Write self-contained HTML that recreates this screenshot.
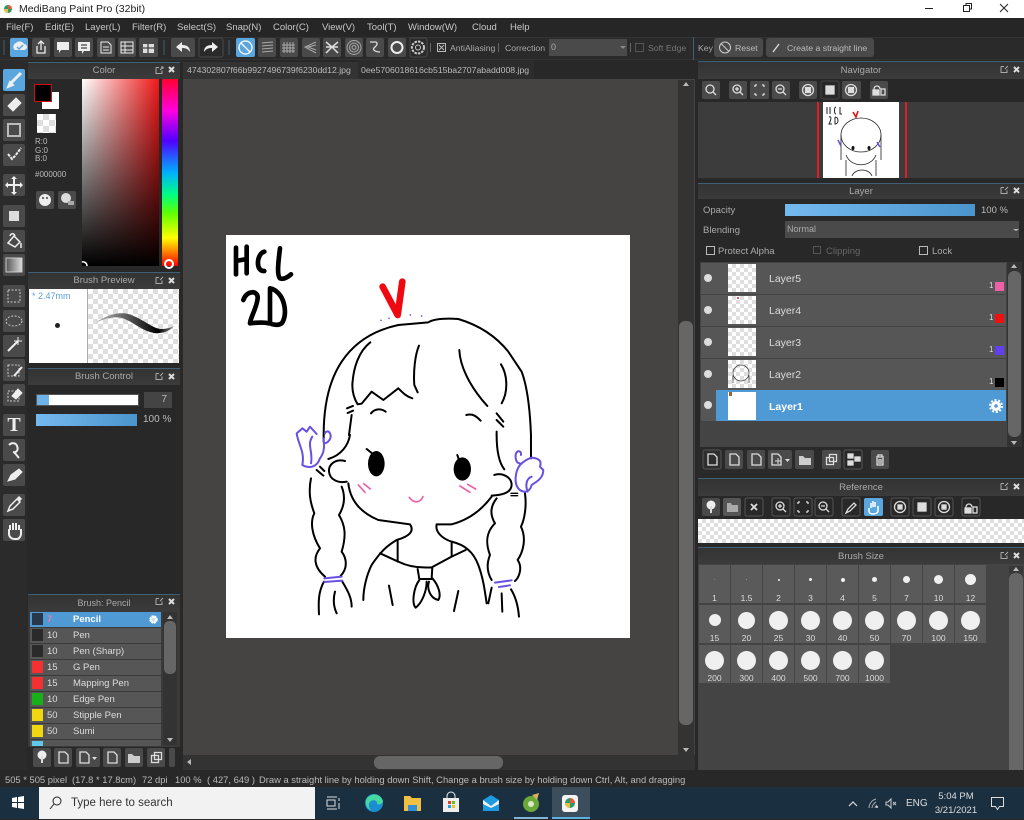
<!DOCTYPE html>
<html><head><meta charset="utf-8"><style>
html,body{margin:0;padding:0;background:#282828}
body{width:1024px;height:819px;overflow:hidden;position:relative;font-family:"Liberation Sans",sans-serif;font-size:9.5px;color:#c4c4c4}
div{position:absolute;box-sizing:border-box}
span{position:absolute;white-space:nowrap}
.h{background:linear-gradient(#333,#3b3b3b);border-top:1px solid #3f6075;text-align:center;color:#aaa;font-size:9.5px;line-height:16px}
.ck{background:repeating-conic-gradient(#dedede 0 25%,#fff 0 50%) 0 0/8px 8px}
.lr{left:701px;width:305px;height:31px;background:#565656}
.th{left:728px;width:28px;height:28px}
.ln{left:769px;font-size:10.5px;color:#ddd;line-height:31px}
.dot{left:704px;width:8px;height:8px;border-radius:50%;background:#ddd}
.bl{left:30px;width:131px;height:15px;background:#565656;color:#ddd;line-height:15px;font-size:9.5px}
.bl i{position:absolute;left:2px;top:1px;width:11px;height:12px}
.bl b{position:absolute;left:17px;font-weight:normal}
.bl u{position:absolute;left:43px;text-decoration:none}
.c{width:31px;height:38px;background:#5a5a5a;color:#ddd;font-size:8.5px;text-align:center;line-height:10px}
.c i{position:absolute;background:#f0f0f0;border-radius:50%}
.c b{position:absolute;left:0;width:100%;bottom:0;font-weight:normal}
</style></head><body>
<!-- title -->
<div style="left:0;top:0;width:1024px;height:18px;background:#fff;color:#222;font-size:10.5px;line-height:18px"><span style="left:19px">MediBang Paint Pro (32bit)</span></div>
<svg style="position:absolute;left:0;top:0" width="1024" height="18"><circle cx="8" cy="9" r="4" fill="#2a9a6a"/><path d="M8 5a4 4 0 0 1 4 4H8z" fill="#e8583a"/><path d="M4 9a4 4 0 0 0 4 4V9z" fill="#e8c040"/><path d="M925 8.500h8" stroke="#222"/><rect x="963.500" y="5.500" width="6" height="6" fill="none" stroke="#222"/><path d="M966 5V3.500h5.500V9H970" fill="none" stroke="#222"/><path d="M1000 4l8 8M1008 4l-8 8" stroke="#222"/></svg>
<!-- menu -->
<div style="left:0;top:18px;width:1024px;height:19px;background:#262626;font-size:9.5px;line-height:19px;color:#c8c8c8">
<span style="left:6px">File(F)</span><span style="left:45px">Edit(E)</span><span style="left:85px">Layer(L)</span><span style="left:132px">Filter(R)</span><span style="left:177px">Select(S)</span><span style="left:226px">Snap(N)</span><span style="left:273px">Color(C)</span><span style="left:322px">View(V)</span><span style="left:367px">Tool(T)</span><span style="left:408px">Window(W)</span><span style="left:472px">Cloud</span><span style="left:510px">Help</span></div>
<div style="left:0;top:37px;width:1024px;height:23px;background:#2a2a2a;border-top:1px solid #333;border-bottom:1px solid #333"></div>
<div style="left:0;top:60px;width:1024px;height:710px;background:#282828"></div>
<!-- canvas area -->
<div style="left:183px;top:79px;width:512px;height:691px;background:#454442"></div>
<div style="left:183px;top:62px;width:175px;height:17px;background:#333;color:#bbb;line-height:17px;font-size:8.7px"><span style="left:4px">474302807f66b9927496739f6230dd12.jpg</span></div>
<div style="left:358px;top:60px;width:176px;height:19px;background:#2c2c2c;color:#bbb;line-height:21px;font-size:8.7px;border-radius:2px 2px 0 0"><span style="left:3px">0ee5706018616cb515ba2707abadd008.jpg</span></div>
<div style="left:678px;top:80px;width:16px;height:675px;background:#333"></div>
<div style="left:679px;top:321px;width:14px;height:404px;background:#666;border-radius:6px"></div>
<div style="left:183px;top:755px;width:512px;height:15px;background:#333"></div>
<div style="left:374px;top:756px;width:129px;height:13px;background:#666;border-radius:6px"></div>
<div style="left:226px;top:235px;width:404px;height:403px;background:#fff"></div>
<!-- left panels -->
<div style="left:0;top:60px;width:27px;height:710px;background:#2b2b2b"></div>
<div class="h" style="left:28px;top:62px;width:152px;height:17px">Color</div>
<div style="left:82px;top:79px;width:77px;height:187px;background:linear-gradient(to top,#000,rgba(0,0,0,0)),linear-gradient(to right,#fff,#f01818)"></div>
<div style="left:162px;top:79px;width:16px;height:187px;background:linear-gradient(#ff0030,#ff00e0 17%,#5000ff 33%,#00b0ff 50%,#00ff80 62%,#60ff00 72%,#ffff00 85%,#ff0000)"></div>
<div style="left:42px;top:92px;width:17px;height:17px;background:#fff"></div>
<div style="left:34px;top:84px;width:18px;height:18px;background:#000;border:1px solid #d01010"></div>
<div class="ck" style="left:37px;top:114px;width:19px;height:19px;background-size:12px 12px"></div>
<div style="left:35px;top:138px;font-size:8px;line-height:8.600px;color:#bbb">R:0<br>G:0<br>B:0</div>
<div style="left:35px;top:170px;font-size:8px;color:#bbb">#000000</div>
<div class="h" style="left:28px;top:272px;width:152px;height:17px">Brush Preview</div>
<div style="left:29px;top:289px;width:58px;height:74px;background:#fff;color:#5a9fd8;font-size:9px"><span style="left:3px;top:2px">* 2.47mm</span><i style="position:absolute;left:26px;top:34px;width:5px;height:5px;border-radius:50%;background:#222"></i></div>
<div class="ck" style="left:87px;top:289px;width:92px;height:74px;background-size:10px 10px;border-left:1px solid #aaa"></div>
<div class="h" style="left:28px;top:368px;width:152px;height:17px">Brush Control</div>
<div style="left:36px;top:394px;width:103px;height:12px;background:#fff;border:1px solid #555"><i style="position:absolute;left:0;top:0;width:12px;height:10px;background:#6db3e8"></i></div>
<div style="left:144px;top:392px;width:28px;height:16px;background:#444;color:#bbb;text-align:right;padding-right:5px;font-size:10px;line-height:16px">7</div>
<div style="left:36px;top:414px;width:101px;height:12px;background:linear-gradient(to right,#74baf0,#4b94cc)"></div>
<span style="left:143px;top:414px;font-size:10px;color:#bbb">100 %</span>
<!-- brush panel -->
<div class="h" style="left:28px;top:594px;width:152px;height:18px;line-height:17px;font-size:9px">Brush: Pencil</div>
<div style="left:28px;top:612px;width:152px;height:135px;background:#3a3a3a"></div>
<div class="bl" style="top:612px;background:#4f9ad4;color:#fff"><i style="background:#283848"></i><b style="color:#e080b0;font-weight:bold">7</b><u style="font-weight:bold">Pencil</u></div>
<div class="bl" style="top:628px"><i style="background:#2a2a2a"></i><b>10</b><u>Pen</u></div>
<div class="bl" style="top:644px"><i style="background:#2a2a2a"></i><b>10</b><u>Pen (Sharp)</u></div>
<div class="bl" style="top:660px"><i style="background:#f43030"></i><b>15</b><u>G Pen</u></div>
<div class="bl" style="top:676px"><i style="background:#f43030"></i><b>15</b><u>Mapping Pen</u></div>
<div class="bl" style="top:692px"><i style="background:#18b018"></i><b>10</b><u>Edge Pen</u></div>
<div class="bl" style="top:708px"><i style="background:#f0d810"></i><b>50</b><u>Stipple Pen</u></div>
<div class="bl" style="top:724px"><i style="background:#f0d810"></i><b>50</b><u>Sumi</u></div>
<div style="left:30px;top:740px;width:131px;height:6px;background:#565656;overflow:hidden"><i style="position:absolute;left:2px;top:1px;width:11px;height:5px;background:#60c8e8"></i></div>
<div style="left:163px;top:612px;width:14px;height:133px;background:#333"></div>
<div style="left:164px;top:621px;width:12px;height:53px;background:#666;border-radius:5px"></div>
<!-- right panels -->
<div class="h" style="left:698px;top:61px;width:326px;height:18px;line-height:17px">Navigator</div>
<div style="left:698px;top:102px;width:326px;height:76px;background:#3c3c3c"></div>
<div style="left:817px;top:102px;width:2px;height:76px;background:#e02020"></div>
<div style="left:905px;top:102px;width:2px;height:76px;background:#e02020"></div>
<div style="left:823px;top:102px;width:76px;height:76px;background:#fff"></div>
<div class="h" style="left:698px;top:183px;width:326px;height:16px;line-height:15px">Layer</div>
<span style="left:703px;top:205px;color:#aaa">Opacity</span>
<div style="left:785px;top:204px;width:190px;height:12px;background:linear-gradient(to right,#74baf0,#4b94cc)"></div>
<span style="left:981px;top:205px;color:#bbb">100 %</span>
<span style="left:703px;top:225px;color:#aaa">Blending</span>
<div style="left:785px;top:221px;width:234px;height:17px;background:#4a4a4a;color:#aaa;line-height:17px;padding-left:2px;font-size:9px">Normal</div>
<span style="left:718px;top:246px;color:#aaa">Protect Alpha</span><span style="left:826px;top:246px;color:#666">Clipping</span><span style="left:932px;top:246px;color:#aaa">Lock</span>
<div style="left:706px;top:246px;width:9px;height:9px;border:1px solid #bbb"></div>
<div style="left:813px;top:246px;width:8px;height:8px;border:1px solid #555"></div>
<div style="left:919px;top:246px;width:9px;height:9px;border:1px solid #bbb"></div>
<div style="left:700px;top:262px;width:307px;height:185px;background:#444"></div>
<div class="lr" style="top:263px"></div><div class="lr" style="top:295px"></div><div class="lr" style="top:327px"></div><div class="lr" style="top:359px"></div>
<div class="lr" style="top:390px;background:#4f9ad4;left:716px;width:290px;height:31px"></div>
<div class="lr" style="top:390px;width:15px;height:31px"></div>
<div class="dot" style="top:274px"></div><div class="dot" style="top:306px"></div><div class="dot" style="top:338px"></div><div class="dot" style="top:370px"></div><div class="dot" style="top:401px"></div>
<div class="th ck" style="top:264px"></div><div class="th ck" style="top:296px"></div><div class="th ck" style="top:328px"></div><div class="th ck" style="top:360px"></div>
<div class="th" style="top:392px;background:#fff"></div>
<span class="ln" style="top:264px">Layer5</span><span class="ln" style="top:296px">Layer4</span><span class="ln" style="top:328px">Layer3</span><span class="ln" style="top:360px">Layer2</span><span class="ln" style="top:392px;color:#fff;font-weight:bold">Layer1</span>
<span style="left:989px;top:281px;color:#ddd;font-size:8px">1</span><div style="left:995px;top:282px;width:9px;height:9px;background:#f060a8"></div>
<span style="left:989px;top:313px;color:#ddd;font-size:8px">1</span><div style="left:995px;top:314px;width:9px;height:9px;background:#f01010"></div>
<span style="left:989px;top:345px;color:#ddd;font-size:8px">1</span><div style="left:995px;top:346px;width:9px;height:9px;background:#6040f0"></div>
<span style="left:989px;top:377px;color:#ddd;font-size:8px">1</span><div style="left:995px;top:378px;width:9px;height:9px;background:#000"></div>
<div style="left:1007px;top:262px;width:15px;height:185px;background:#333"></div>
<div style="left:1008px;top:271px;width:13px;height:166px;background:#666;border-radius:6px"></div>
<div style="left:698px;top:447px;width:326px;height:26px;background:#2a2a2a"></div>
<div class="h" style="left:698px;top:478px;width:326px;height:18px;line-height:18px">Reference</div>
<div class="ck" style="left:698px;top:519px;width:326px;height:24px"></div>
<div class="h" style="left:698px;top:547px;width:326px;height:17px;line-height:17px">Brush Size</div>
<div style="left:698px;top:564px;width:326px;height:206px;background:#444"></div>
<div style="left:1009px;top:566px;width:14px;height:204px;background:#383838"></div>
<div style="left:1009px;top:573px;width:14px;height:197px;background:#666;border-radius:6px 6px 0 0"></div>
<div class="c" style="left:699px;top:565px"><i style="left:15px;top:14px;width:1px;height:1px;background:#888"></i><b>1</b></div>
<div class="c" style="left:731px;top:565px"><i style="left:15px;top:14px;width:1px;height:1px;background:#aaa"></i><b>1.5</b></div>
<div class="c" style="left:763px;top:565px"><i style="left:15px;top:14px;width:2px;height:2px"></i><b>2</b></div>
<div class="c" style="left:795px;top:565px"><i style="left:14px;top:13px;width:3px;height:3px"></i><b>3</b></div>
<div class="c" style="left:827px;top:565px"><i style="left:14px;top:13px;width:4px;height:4px"></i><b>4</b></div>
<div class="c" style="left:859px;top:565px"><i style="left:13px;top:12px;width:5px;height:5px"></i><b>5</b></div>
<div class="c" style="left:891px;top:565px"><i style="left:12px;top:11px;width:7px;height:7px"></i><b>7</b></div>
<div class="c" style="left:923px;top:565px"><i style="left:11px;top:10px;width:9px;height:9px"></i><b>10</b></div>
<div class="c" style="left:955px;top:565px"><i style="left:10px;top:9px;width:11px;height:11px"></i><b>12</b></div>
<div class="c" style="left:699px;top:605px"><i style="left:10px;top:9px;width:12px;height:12px"></i><b>15</b></div>
<div class="c" style="left:731px;top:605px"><i style="left:7px;top:7px;width:17px;height:17px"></i><b>20</b></div>
<div class="c" style="left:763px;top:605px"><i style="left:6px;top:6px;width:19px;height:19px"></i><b>25</b></div>
<div class="c" style="left:795px;top:605px"><i style="left:6px;top:6px;width:19px;height:19px"></i><b>30</b></div>
<div class="c" style="left:827px;top:605px"><i style="left:6px;top:6px;width:19px;height:19px"></i><b>40</b></div>
<div class="c" style="left:859px;top:605px"><i style="left:6px;top:6px;width:19px;height:19px"></i><b>50</b></div>
<div class="c" style="left:891px;top:605px"><i style="left:6px;top:6px;width:19px;height:19px"></i><b>70</b></div>
<div class="c" style="left:923px;top:605px"><i style="left:6px;top:6px;width:19px;height:19px"></i><b>100</b></div>
<div class="c" style="left:955px;top:605px"><i style="left:6px;top:6px;width:19px;height:19px"></i><b>150</b></div>
<div class="c" style="left:699px;top:645px"><i style="left:6px;top:6px;width:19px;height:19px"></i><b>200</b></div>
<div class="c" style="left:731px;top:645px"><i style="left:6px;top:6px;width:19px;height:19px"></i><b>300</b></div>
<div class="c" style="left:763px;top:645px"><i style="left:6px;top:6px;width:19px;height:19px"></i><b>400</b></div>
<div class="c" style="left:795px;top:645px"><i style="left:6px;top:6px;width:19px;height:19px"></i><b>500</b></div>
<div class="c" style="left:827px;top:645px"><i style="left:6px;top:6px;width:19px;height:19px"></i><b>700</b></div>
<div class="c" style="left:859px;top:645px"><i style="left:6px;top:6px;width:19px;height:19px"></i><b>1000</b></div>
<!-- toolbar text -->
<span style="left:450px;top:43px;color:#aaa;font-size:8.7px">AntiAliasing</span><span style="left:505px;top:43px;color:#aaa;font-size:8.7px">Correction</span>
<div style="left:549px;top:39px;width:78px;height:17px;background:#4a4a4a;color:#aaa;font-size:9px;line-height:17px;padding-left:2px">0</div>
<span style="left:648px;top:43px;color:#777;font-size:8.7px">Soft Edge</span><span style="left:698px;top:43px;color:#aaa;font-size:8.7px">Key</span>
<div style="left:714px;top:38px;width:49px;height:19px;background:#4a4a4a;border-radius:3px;color:#bbb;font-size:8.7px;line-height:21px"><span style="left:21px">Reset</span></div>
<div style="left:766px;top:38px;width:108px;height:19px;background:#4a4a4a;border-radius:3px;color:#bbb;font-size:8.7px;line-height:21px"><span style="left:21px">Create a straight line</span></div>
<!-- status -->
<div style="left:0;top:770px;width:1024px;height:17px;background:#282828;color:#bbb;font-size:9.4px;line-height:20px">
<span style="left:5px">505 * 505 pixel</span><span style="left:72px">(17.8 * 17.8cm)</span><span style="left:142px">72 dpi</span><span style="left:175px">100 %</span><span style="left:207px">( 427, 649 )</span><span style="left:259px">Draw a straight line by holding down Shift, Change a brush size by holding down Ctrl, Alt, and dragging</span></div>
<!-- taskbar -->
<div style="left:0;top:787px;width:1024px;height:32px;background:#1a2f40"></div>
<div style="left:39px;top:787px;width:276px;height:32px;background:#f2f2f2;color:#333;font-size:11.5px;line-height:33px"><span style="left:32px">Type here to search</span></div>
<div style="left:552px;top:787px;width:38px;height:32px;background:#3c4e5c"></div>
<span style="left:906px;top:798px;color:#ddd;font-size:10px">ENG</span>
<div style="left:930px;top:790px;width:52px;text-align:center;color:#ddd;font-size:9.5px;line-height:14px">5:04 PM<br>3/21/2021</div>
<!-- overlay icons -->
<svg style="position:absolute;left:0;top:0" width="1024" height="819" fill="none">
<g fill="#4a4a4a">
<rect x="3" y="69" width="22" height="22" rx="2" fill="#5aa6de"/><rect x="3" y="94" width="22" height="22" rx="2"/><rect x="3" y="119" width="22" height="22" rx="2"/><rect x="3" y="144" width="22" height="22" rx="2"/><rect x="3" y="174" width="22" height="22" rx="2"/><rect x="3" y="205" width="22" height="22" rx="2"/><rect x="3" y="230" width="22" height="22" rx="2"/><rect x="3" y="254" width="22" height="22" rx="2"/><rect x="3" y="285" width="22" height="22" rx="2"/><rect x="3" y="310" width="22" height="22" rx="2"/><rect x="3" y="335" width="22" height="22" rx="2"/><rect x="3" y="359" width="22" height="22" rx="2"/><rect x="3" y="384" width="22" height="22" rx="2"/><rect x="3" y="414" width="22" height="22" rx="2"/><rect x="3" y="439" width="22" height="22" rx="2"/><rect x="3" y="464" width="22" height="22" rx="2"/><rect x="3" y="494" width="22" height="22" rx="2"/><rect x="3" y="519" width="22" height="22" rx="2"/>
<rect x="10" y="38" width="18" height="19" rx="2" fill="#5aa6de"/><rect x="32" y="38" width="18" height="19" rx="2"/><rect x="54" y="38" width="18" height="19" rx="2"/><rect x="75" y="38" width="18" height="19" rx="2"/><rect x="97" y="38" width="18" height="19" rx="2"/><rect x="118" y="38" width="18" height="19" rx="2"/><rect x="139" y="38" width="19" height="19" rx="2"/><rect x="171" y="38" width="24" height="19" rx="2"/><rect x="199" y="38" width="24" height="19" rx="2" fill="#2a2a2a" stroke="#4a4a4a"/><rect x="236" y="38" width="19" height="19" rx="2" fill="#5aa6de"/><rect x="258" y="38" width="18" height="19" rx="2"/><rect x="280" y="38" width="18" height="19" rx="2"/><rect x="302" y="38" width="18" height="19" rx="2"/><rect x="323" y="38" width="18" height="19" rx="2"/><rect x="345" y="38" width="18" height="19" rx="2"/><rect x="366" y="38" width="18" height="19" rx="2"/><rect x="388" y="38" width="18" height="19" rx="2"/><rect x="410" y="38" width="17" height="19" rx="2" fill="#2a2a2a" stroke="#4a4a4a"/>
<rect x="36" y="191" width="18" height="18" rx="2"/><rect x="58" y="191" width="18" height="18" rx="2"/>
<rect x="702" y="81" width="18" height="18" rx="2"/><rect x="729" y="81" width="18" height="18" rx="2"/><rect x="750" y="81" width="19" height="18" rx="2"/><rect x="772" y="81" width="18" height="18" rx="2"/><rect x="799" y="81" width="18" height="18" rx="2"/><rect x="821" y="81" width="18" height="18" rx="2" fill="#282828" stroke="#444"/><rect x="842" y="81" width="19" height="18" rx="2"/><rect x="870" y="81" width="18" height="18" rx="2"/>
<rect x="703" y="450" width="18" height="19" rx="2" fill="#2e2e2e" stroke="#555"/><rect x="725" y="450" width="18" height="19" rx="2"/><rect x="747" y="450" width="18" height="19" rx="2"/><rect x="768" y="450" width="24" height="19" rx="2"/><rect x="795" y="450" width="19" height="19" rx="2"/><rect x="822" y="450" width="19" height="19" rx="2"/><rect x="844" y="450" width="18" height="19" rx="2" fill="#282828" stroke="#555"/><rect x="871" y="450" width="18" height="19" rx="2"/>
<rect x="702" y="498" width="18" height="18" rx="2"/><rect x="723" y="498" width="18" height="18" rx="2" fill="#555"/><g fill="#282828" stroke="#555"><rect x="745" y="498" width="18" height="18" rx="2"/><rect x="772" y="498" width="18" height="18" rx="2"/><rect x="794" y="498" width="18" height="18" rx="2"/><rect x="815" y="498" width="18" height="18" rx="2"/><rect x="842" y="498" width="18" height="18" rx="2"/><rect x="891" y="498" width="18" height="18" rx="2"/><rect x="913" y="498" width="18" height="18" rx="2"/><rect x="935" y="498" width="18" height="18" rx="2"/><rect x="962" y="498" width="18" height="18" rx="2"/></g><rect x="864" y="498" width="19" height="18" rx="2" fill="#5aa6de"/>
<rect x="33" y="748" width="18" height="19" rx="2"/><rect x="54" y="748" width="18" height="19" rx="2"/><rect x="76" y="748" width="24" height="19" rx="2"/><rect x="103" y="748" width="18" height="19" rx="2"/><rect x="125" y="748" width="18" height="19" rx="2"/><rect x="147" y="748" width="18" height="19" rx="2"/><rect x="169" y="748" width="6" height="19" rx="2"/>
</g>
<!-- left tools -->
<g stroke="#eee" stroke-width="2">
<path d="M21 73L11 83" stroke-width="3"/><path d="M10 82l3 3-5 2z" fill="#eee"/>
<path d="M8 106l8-8 5 5-8 8z" fill="#eee" stroke-width="1"/>
<rect x="8" y="124" width="12" height="12" stroke="#bbb"/>
<path d="M8 154l4 5 3-3 6-8" stroke-dasharray="3 1"/>
<path d="M14 177v16M6 185h16" stroke-width="2"/><path d="M14 176l-3 3h6zM14 195l-3-3h6zM5 185l3-3v6zM23 185l-3-3v6z" fill="#eee" stroke="none"/>
<rect x="9" y="211" width="10" height="10" fill="#ddd" stroke="none"/>
<path d="M8 243l6-7 6 6-5 5zM10 236c1-3 4-3 5 0M21 243v5" stroke-width="1.500"/>
<rect x="6" y="258" width="16" height="14" fill="url(#gr)" stroke="#ccc" stroke-width="1"/>
<g stroke="#ccc" stroke-width="1" stroke-dasharray="2 1.500"><rect x="8" y="290" width="12" height="12"/><ellipse cx="14" cy="321" rx="8" ry="5"/><rect x="8" y="365" width="11" height="11"/><rect x="8" y="391" width="11" height="10"/></g>
<path d="M8 351l10-10" stroke-width="2"/><path d="M18 337v8M14 341h8" stroke-width="1"/><path d="M14 376l8-9" stroke-width="2"/><path d="M12 396l6-7 4 4-6 6z" fill="#eee" stroke-width="1"/>
<path d="M9 445c3-3 7-2 8 1 2 4-1 7-4 6M14 452l5 6" stroke-width="2"/><path d="M8 481l3-6 8-6 3 3-7 7z" fill="#eee" stroke-width="1"/>
<path d="M8 511l2-5 7-7 3 3-7 7z" stroke-width="1.500"/><path d="M18 497l3 3" stroke-width="3"/>
<path d="M9 529v5c0 3 3 5 5 5h3c2 0 4-3 4-5v-5M10 530v-5M13 530v-7M16 530v-7M19 530v-5" stroke-width="2"/>
</g>
<defs><linearGradient id="gr" x1="0" x2="1"><stop offset="0" stop-color="#555"/><stop offset="1" stop-color="#ddd"/></linearGradient><linearGradient id="bs" x1="0" x2="1"><stop offset="0" stop-color="#bbb"/><stop offset=".5" stop-color="#444"/><stop offset=".8" stop-color="#000"/><stop offset="1" stop-color="#888"/></linearGradient></defs>
<text x="14" y="431" font-family="Liberation Serif" font-weight="bold" font-size="20" fill="#eee" text-anchor="middle">T</text>
<!-- top toolbar icons -->
<path d="M15 50a4 4 0 0 1 1-7 5 5 0 0 1 8 1 3 3 0 0 1 0 6z" fill="#eee"/><path d="M17 47l2 2 4-4" stroke="#5aa6de" stroke-width="1.500"/>
<g stroke="#eee" stroke-width="1.300"><path d="M37 46v7h8v-7M41 50v-9M38 44l3-3 3 3"/><path d="M57 42h12v8h-8l-2 3v-3h-2z" fill="#eee" stroke="none" transform="translate(0,0)"/><path d="M78 42h12v9h-6l-2 3v-3h-4z" fill="#eee" stroke="none"/><path d="M81 45h6M81 48h6" stroke="#444"/><path d="M101 42h7l3 3v8h-10zM103 47h6M103 50h6" stroke-width="1"/><path d="M121 42h12v11h-12zM121 46h12M121 50h12M125 42v11" stroke-width="1"/><rect x="143" y="44" width="11" height="9" fill="#ddd" stroke="none"/><path d="M148 44v9M143 48h11" stroke="#444"/></g>
<path d="M176 47l6-5v3c6 0 8 3 8 7-2-3-4-4-8-4v4z" fill="#eee"/><path d="M218 47l-6-5v3c-6 0-8 3-8 7 2-3 4-4 8-4v4z" fill="#eee"/>
<circle cx="245.500" cy="47.500" r="6.500" stroke="#fff" stroke-width="1.300"/><path d="M241 43l9 9" stroke="#fff" stroke-width="1.300"/>
<g stroke="#aaa"><path d="M262 43l11-1M262 46l11-1M262 49l11-1M262 52l11-1"/><path d="M284 42v11M287 42v11M290 42v11M293 42v11M282 45h13M282 48h13M282 51h13"/><path d="M316 42l-11 5 11 6M316 45l-8 2 8 3"/><path d="M332 47l-6-5M332 47l6-5M332 47l-6 6M332 47l6 6M326 47h12" stroke="#ddd" stroke-width="1.500"/><circle cx="354" cy="47.500" r="7"/><circle cx="354" cy="47.500" r="4.500"/><circle cx="354" cy="47.500" r="2"/><path d="M370 42h6c3 2-1 5-2 6-2 2 2 4 6 4" stroke="#ddd" stroke-width="1.300"/></g>
<circle cx="397" cy="47.500" r="5.500" stroke="#eee" stroke-width="2"/><circle cx="418" cy="47.500" r="6" stroke="#ccc" stroke-width="2" stroke-dasharray="2.500 1"/><circle cx="418" cy="47.500" r="2.500" stroke="#ccc"/>
<rect x="437.500" y="43.500" width="8" height="8" stroke="#bbb"/><path d="M439 45l5 5M444 45l-5 5" stroke="#bbb"/>
<path d="M430.500 43v9M498.500 43v9M630.500 43v9" stroke="#666"/><rect x="635.500" y="43.500" width="8" height="8" stroke="#555"/><path d="M620 46l3 3 3-3z" fill="#888"/>
<path d="M693.500 37v23" stroke="#3f6075"/><path d="M4 40v15M164 40v15M229 40v15" stroke="#3f6075"/>
<circle cx="725" cy="47.500" r="5.500" stroke="#ccc"/><path d="M721 43.500l8 8" stroke="#ccc"/><path d="M773 52l6-8" stroke="#ddd" stroke-width="1.300"/>
<!-- panel header icons -->
<g stroke="#aaa"><path d="M156 67.500h3M156 67.500v6h6v-3M160 70l3-3M161 67h2v2"/><path d="M1001 66.500h3M1001 66.500v6h6v-3M1005 69l3-3"/></g>
<g id="x" stroke="#ddd" stroke-width="2"><path d="M169 67l5 5M174 67l-5 5"/><path d="M1014 67l5 5M1019 67l-5 5"/><path d="M1014 188l5 5M1019 188l-5 5"/><path d="M1014 484l5 5M1019 484l-5 5"/><path d="M1014 553l5 5M1019 553l-5 5"/><path d="M169 278l5 5M174 278l-5 5"/><path d="M169 374l5 5M174 374l-5 5"/><path d="M169 599l5 5M174 599l-5 5"/></g>
<g stroke="#aaa"><path d="M156 277.500h3M156 277.500v6h6v-3M160 280l3-3"/><path d="M156 373.500h3M156 373.500v6h6v-3M160 376l3-3"/><path d="M156 598.500h3M156 598.500v6h6v-3M160 601l3-3"/><path d="M1001 187.500h3M1001 187.500v6h6v-3M1005 190l3-3"/><path d="M1001 483.500h3M1001 483.500v6h6v-3M1005 486l3-3"/><path d="M1001 552.500h3M1001 552.500v6h6v-3M1005 555l3-3"/></g>
<!-- color buttons -->
<circle cx="45" cy="200" r="6" fill="#eee"/><circle cx="43" cy="198" r="1" fill="#444"/><circle cx="47" cy="198" r="1" fill="#444"/><circle cx="66" cy="198" r="5" fill="#ddd"/><rect x="68" y="201" width="6" height="4" fill="#aaa"/>
<circle cx="169" cy="264" r="4" stroke="#fff" stroke-width="2"/><path d="M82 262a4 4 0 0 1 5 4" stroke="#fff" stroke-width="1.500"/>
<!-- brush stroke -->
<path d="M95 323C108 314 120 312 128 314C142 318 150 327 160 329C166 329 170 328 174 326C170 331 162 334 154 333C142 331 132 321 122 318C112 316 104 319 95 323Z" fill="url(#bs)"/>
<!-- scroll arrows -->
<g fill="#bbb"><path d="M683 86l3-4 3 4z"/><path d="M683 748l3 4 3-4z"/><path d="M187 762l4-3v6z"/><path d="M1011 268l3-4 3 4z"/><path d="M1011 441l3 4 3-4z"/><path d="M1013 571l3-4 3 4z"/><path d="M167 619l3-4 3 4z"/><path d="M167 738l3 4 3-4z"/><path d="M1013 229l3 2 3-2z"/></g>
<!-- nav icons -->
<g stroke="#ddd" stroke-width="1.300">
<circle cx="710" cy="89" r="4"/><path d="M713 92l3 3"/><circle cx="737" cy="89" r="4"/><path d="M740 92l3 3M735 89h4M737 87v4"/><path d="M755 85h2M755 85v2M764 85h-2M764 85v2M755 95h2M755 95v-2M764 95h-2M764 95v-2"/><circle cx="780" cy="89" r="4"/><path d="M783 92l3 3M778 89h4"/><circle cx="808" cy="90" r="5.500"/><rect x="805.500" y="87.500" width="5" height="5" fill="#ddd"/><rect x="826" y="86" width="8" height="8" fill="#ddd"/><circle cx="851" cy="90" r="5.500"/><rect x="848.500" y="87.500" width="5" height="5" fill="#ddd"/><path d="M874 95v-6a3 3 0 0 1 6 0"/><rect x="881" y="89" width="4" height="6"/><rect x="873" y="90" width="6" height="5" fill="#ddd"/>
<!-- ref icons -->
<circle cx="711" cy="505" r="4.500" fill="#eee" stroke="none"/><path d="M711 506v7" stroke-width="2"/><path d="M727 503h4l1 2h6v7h-11z" fill="#aaa" stroke="none"/><path d="M751 504l6 6M757 504l-6 6" stroke-width="1.800"/><circle cx="780" cy="506" r="4"/><path d="M783 509l3 3M778 506h4M780 504v4"/><path d="M798 502h2M798 502v2M808 502h-2M808 502v2M798 512h2M798 512v-2M808 512h-2M808 512v-2"/><circle cx="823" cy="506" r="4"/><path d="M826 509l3 3M821 506h4"/><path d="M846 513l2-4 6-6 2 2-6 6z"/><path d="M869 508v3c0 2 2 3 4 3s5-1 5-3v-5M871 508v-5M873 507v-6M875 507v-5" stroke="#fff" stroke-width="1.500"/><circle cx="900" cy="507" r="5.500"/><rect x="898" y="505" width="4" height="4" fill="#ddd"/><rect x="918" y="503" width="8" height="8" fill="#ddd"/><circle cx="944" cy="507" r="5.500"/><rect x="942" y="505" width="4" height="4" fill="#ddd"/><path d="M966 513v-6a3 3 0 0 1 6 0"/><rect x="973" y="507" width="4" height="6"/><rect x="965" y="508" width="6" height="5" fill="#ddd"/>
<!-- layer toolbar icons -->
<path d="M708 454h6l3 3v8h-9z"/><path d="M730 454h6l3 3v8h-9z"/><path d="M752 454h6l3 3v8h-9z"/><path d="M772 454h6l3 3v8h-9z"/><path d="M775 461h6M778 458v6" stroke-width="1"/><path d="M799 456h4l2 2h6v7h-12z" fill="#ccc" stroke="none"/><rect x="826.500" y="457.500" width="7" height="7"/><rect x="829.500" y="454.500" width="7" height="7"/><rect x="848" y="454" width="5" height="4" fill="#ddd"/><rect x="848" y="461" width="5" height="4" fill="#ddd"/><rect x="855" y="457" width="5" height="4" fill="#ddd"/><path d="M876 457h8M878 457v-2h4v2M877 458v7h6v-7M879 459v5M881 459v5"/>
<path d="M785 459h5l-2.500 3z" fill="#ddd" stroke="none"/>
<!-- brush toolbar icons -->
<circle cx="42" cy="755" r="4.500" fill="#eee" stroke="none"/><path d="M42 756v7" stroke-width="2"/><path d="M59 752h6l3 3v8h-9z"/><path d="M80 752h6l3 3v8h-9z"/><path d="M92 757h5l-2.500 3z" fill="#ddd" stroke="none"/><path d="M108 752h6l3 3v8h-9z"/><path d="M128 754h4l2 2h6v7h-12z" fill="#ccc" stroke="none"/><rect x="151.500" y="755.500" width="7" height="7"/><rect x="154.500" y="752.500" width="7" height="7"/>
</g>
<!-- gears -->
<circle cx="153.500" cy="619.500" r="3" stroke="#fff" stroke-width="2.500" stroke-dasharray="1.800 .6"/><circle cx="153.500" cy="619.500" r="3.500" fill="#fff" opacity=".7"/>
<circle cx="996" cy="406" r="5" fill="#fff"/><circle cx="996" cy="406" r="6" stroke="#fff" stroke-width="2" stroke-dasharray="2 1.800"/><circle cx="996" cy="406" r="1.800" fill="#4f9ad4"/>
<!-- thumbnails -->
<g stroke="#333" stroke-width=".7"><circle cx="741" cy="373" r="8"/><path d="M733 375v8M749 375v8"/></g><circle cx="738" cy="298" r="1" fill="#c22"/><rect x="729" y="392" width="3" height="4" fill="#963"/>
<!-- navigator thumbnail -->
<g stroke="#222"><ellipse cx="861" cy="135" rx="20" ry="17" stroke-width=".8"/><path d="M841 135v25M881 135v25M846 155c5 13 25 13 30 0M846 160v16M876 160v16M852 176c3-8 17-8 20 0" stroke-width=".8"/><path d="M827 107v7M830 107v7M836 107c-2 0-2 7 0 7M840 107v7h2" stroke-width="1"/><path d="M829 117c2-1 3 1 0 7h3M835 117v7c4 0 4-7 0-7" stroke-width="1"/></g><path d="M853 112l3 5 2-6" stroke="#e01010" stroke-width="1.600"/><ellipse cx="853" cy="148" rx="1.500" ry="2" fill="#111"/><ellipse cx="869" cy="148" rx="1.500" ry="2" fill="#111"/><path d="M838 140l3 6M877 142l3 5" stroke="#6a50e0" stroke-width="1.500"/>
<!-- artwork -->
<g transform="translate(225,235) scale(.3333)" stroke-linecap="round" stroke-linejoin="round">
<g stroke="#000" stroke-width="14"><path d="M33 38V118M65 35V115M33 78L65 72M118 50C95 55 90 110 118 108M165 40C160 80 155 120 165 130C175 135 190 125 198 118"/><path d="M55 195C65 165 100 165 98 190C95 220 75 250 75 265C100 262 120 262 130 265M135 165V265M135 160C180 170 190 240 170 265C160 272 145 270 135 265"/></g>
<path d="M473 155L518 240L532 140" stroke="#f00810" stroke-width="20"/>
<g fill="#6a50e0"><circle cx="468" cy="256" r="2.500"/><circle cx="492" cy="250" r="2.500"/><circle cx="556" cy="240" r="2.500"/><circle cx="590" cy="243" r="2.500"/></g>
<g stroke="#000" stroke-width="6">
<path d="M296 600C296 520 310 440 350 380C390 320 450 285 520 270L610 262C630 250 670 250 700 252C760 270 810 300 850 350L890 410C905 450 915 520 918 600"/>
<path d="M436 322C400 350 385 400 382 450C382 475 390 495 398 508L410 506L440 470L475 495L520 460C535 475 545 485 562 490"/>
<path d="M582 332C570 360 565 410 568 450L578 472M703 345C705 390 730 450 787 513M828 388C848 420 850 470 830 505M438 535C450 520 470 520 482 530M724 540C745 535 755 545 767 557M366 520L384 513M368 534L384 527M815 535L835 560M815 555L835 575M380 540L372 600M815 590V600"/>
</g></g>
<g transform="translate(225,435) scale(.3333)" stroke-linecap="round" stroke-linejoin="round">
<g stroke="#000" stroke-width="6">
<path d="M296 0V20M375 0C370 30 350 60 310 72M360 78C330 70 310 90 312 110C315 135 340 145 365 140M370 145C375 190 400 230 460 255L555 268C570 290 550 305 515 315C490 330 470 345 440 390C425 420 415 460 415 495"/>
<path d="M635 268C630 290 650 310 680 320C720 330 745 350 760 390C775 430 780 470 785 505M635 268H680C730 255 770 225 800 185M808 120C830 112 860 125 860 150C858 175 830 180 800 182"/>
<path d="M465 355L520 380C550 395 580 400 620 397L680 365L722 345M518 318V380M680 322V365M578 402L583 432H620L622 397M583 435C565 460 560 505 572 518C590 505 605 470 605 440M612 440C605 460 615 490 640 495C650 480 640 450 622 430M492 452L503 510M700 468L687 528"/>
<path d="M258 130C250 170 255 200 268 235C255 260 260 300 285 340C265 365 265 395 300 425M345 425C370 400 365 370 350 350C365 300 360 270 342 240C360 210 360 180 350 155M297 440C280 470 280 500 282 538M330 470C322 500 328 520 335 535M352 440C370 470 380 490 380 515"/>
<path d="M815 190C795 215 795 240 810 265C785 290 780 320 795 360C785 385 785 410 800 435M900 175C905 210 900 250 888 275C905 310 895 350 878 375C895 400 880 430 870 438M815 0C815 40 820 80 838 103M918 0V70M830 475L832 530M858 463C875 490 880 520 882 545M800 458L790 505M275 105L295 122M285 95L298 108M425 42L445 58M697 60L702 75"/>
<path d="M858 175H878M858 182H878" stroke-width="4"/>
</g>
<ellipse cx="454" cy="86" rx="25" ry="38" fill="#000"/><ellipse cx="712" cy="102" rx="26" ry="35" fill="#000"/>
<g stroke="#ec5fa8" stroke-width="5"><path d="M400 150L420 172M416 146L436 162M705 153L735 172M728 148L752 162M553 187C565 205 585 205 594 185"/></g>
<g stroke="#6a50e0" stroke-width="6"><path d="M298 430L350 425M298 441L352 437M810 443L860 436M822 456L855 451"/>
<path d="M215 -5L232 -20L245 -10L255 -25L275 -3M215 -5C220 30 240 50 232 90C250 100 275 100 285 70C300 50 298 30 295 10M300 25C315 20 320 5 315 -5C310 -15 300 -10 300 -5M262 5C245 30 265 50 258 85"/>
<path d="M885 90C870 110 865 150 885 165C900 175 915 170 920 150C935 140 955 130 955 105L945 95C950 80 945 70 920 68C905 72 895 80 885 90M908 170C900 150 905 130 920 125M885 85C870 85 870 60 875 52C880 45 890 50 888 60"/></g></g>
<!-- taskbar icons -->
<g fill="#fff"><path d="M12 798l5-1v5h-5zM18 797l6-1v6h-6zM12 803h5v5l-5-1zM18 803h6v6l-6-1z"/></g>
<circle cx="57" cy="801" r="4" stroke="#222"/><path d="M54 804l-4 5" stroke="#222"/>
<path d="M327 797h10M327 809h10M327 800h8v6h-8zM339 798v3M339 803v6" stroke="#ddd"/>
<circle cx="374" cy="803" r="9" fill="#1a8ed0"/><path d="M366 800c3-7 14-8 17 1 0 3-4 4-6 3 1-3-3-5-6-3-3 2-3 6 0 9-4-1-6-6-5-10z" fill="#45d8a0"/>
<path d="M404 796h6l2 2h9v13h-17z" fill="#f0c040"/><rect x="408" y="805" width="9" height="6" fill="#3090d8"/>
<rect x="443" y="798" width="16" height="14" fill="#eee"/><path d="M447 798v-2a4 4 0 0 1 8 0v2" stroke="#eee"/><rect x="448" y="801" width="3" height="3" fill="#e04020"/><rect x="452" y="801" width="3" height="3" fill="#60c020"/><rect x="448" y="805" width="3" height="3" fill="#20a0e0"/><rect x="452" y="805" width="3" height="3" fill="#f0c020"/>
<path d="M483 800l8-5 8 5v11h-16z" fill="#1e9be0"/><path d="M483 800l8 6 8-6v4l-8 4-8-4z" fill="#eee"/>
<circle cx="531" cy="804" r="8" fill="#6aa83a"/><circle cx="531" cy="804" r="3" fill="#dde8c8"/><path d="M532 795l7-2-2 7" fill="#d8b060"/>
<rect x="562" y="795" width="16" height="17" rx="3" fill="#f4f4f4"/><circle cx="570" cy="803" r="5" fill="#2a9a6a"/><path d="M570 798a5 5 0 0 1 5 5h-5z" fill="#e8583a"/><path d="M565 803a5 5 0 0 0 5 5v-5z" fill="#e8c040"/>
<rect x="552" y="817" width="38" height="2" fill="#5ab0e0"/>
<rect x="514" y="817" width="34" height="2" fill="#7fb4d8"/>
<path d="M849 806l4-4 4 4" stroke="#ddd" stroke-width="1.200"/>
<path d="M869 808c0-4 3-8 7-9M872 808c0-2 2-5 4-6M875 808c0-1 1-2 2-3" stroke="#aaa"/><circle cx="877" cy="807" r="1" fill="#ddd"/>
<path d="M886 802h2l3-3v9l-3-3h-2zM893 802l3 3M896 802l-3 3" stroke="#ccc"/>
<path d="M991.500 797.500h12v9h-4l-2 3-2-3h-4z" stroke="#ddd"/>
</svg>
</body></html>
